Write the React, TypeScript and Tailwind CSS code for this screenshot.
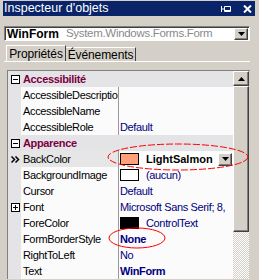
import React from 'react';

const raised = 'border border-t-white border-l-white border-r-[#404040] border-b-[#404040] shadow-[inset_-1px_-1px_0_#808080]';

function Box({ plus }: { plus?: boolean }) {
  return (
    <svg width="9" height="9" viewBox="0 0 9 9" className="block">
      <rect x="0.5" y="0.5" width="8" height="8" fill="#fff" stroke="#000" />
      <line x1="2" y1="4.5" x2="7" y2="4.5" stroke="#000" />
      {plus && <line x1="4.5" y1="2" x2="4.5" y2="7" stroke="#000" />}
    </svg>
  );
}

function DownArrow() {
  return (
    <svg width="7" height="4" viewBox="0 0 7 4">
      <path d="M0 0h7L3.5 4z" fill="#000" />
    </svg>
  );
}

function Category({ label }: { label: string }) {
  return (
    <div className="flex h-[16px] items-center bg-[#e4e3e6]">
      <div className="flex w-[13px] justify-center pl-[1px]">
        <Box />
      </div>
      <span className="pl-[2px] font-bold text-[#7a0040]">{label}</span>
    </div>
  );
}

interface RowProps {
  name: string;
  value?: React.ReactNode;
  margin?: React.ReactNode;
  selected?: boolean;
}

function Row({ name, value, margin, selected }: RowProps) {
  return (
    <div className="flex h-[16px] items-stretch">
      <div className="flex w-[13px] items-center justify-center bg-[#e4e3e6] pl-[1px]">{margin}</div>
      <div className={`w-[97px] overflow-hidden whitespace-nowrap pl-[2px] leading-[16px] text-black ${selected ? 'bg-[#e6e6e6]' : 'bg-[#fbfbfb]'}`}>
        {name}
      </div>
      <div className="w-[1px] bg-[#9a9a9a]" />
      <div className="flex flex-1 items-center overflow-hidden whitespace-nowrap bg-[#fbfbfb] pl-[1px] text-[#000080]">
        {value}
      </div>
    </div>
  );
}

function Swatch({ color }: { color: string }) {
  return <span className="mr-[7px] inline-block h-[12px] w-[19px] border border-black" style={{ backgroundColor: color }} />;
}

export default function App() {
  return (
    <div className="relative h-[280px] w-[259px] overflow-hidden bg-[#d4d0c8] text-[11px] tracking-[-0.35px] font-['Liberation_Sans',Arial,sans-serif]">
      {/* title bar */}
      <div className="ml-[3px] mr-[4px] mt-[1px] flex h-[15px] items-center justify-between bg-[#0a246a] pl-[1px] pr-[3px]">
        <span className="text-[12.5px] tracking-[0px] text-white">Inspecteur d'objets</span>
        <div className="flex items-center gap-[12px]">
          <svg width="10" height="8" viewBox="0 0 10 8">
            <path d="M0.5 1v6M0.5 4h3M3.5 1.5h6v5h-6z M3.5 5.5h6" stroke="#fff" fill="none" />
          </svg>
          <svg width="9" height="8" viewBox="0 0 9 8">
            <path d="M1 0.5l7 7M8 0.5l-7 7" stroke="#fff" strokeWidth="2" />
          </svg>
        </div>
      </div>

      {/* combo box */}
      <div className="ml-[4px] mt-[10px] flex h-[15px] w-[246px] items-center border border-t-[#808080] border-l-[#808080] border-r-white border-b-white bg-white shadow-[inset_1px_1px_0_#404040]">
        <span className="pl-[2px] pt-[1px] text-[12px] font-bold tracking-[0px] text-black">WinForm</span>
        <span className="ml-[7px] pt-[1px] text-[11.5px] tracking-[-0.3px] text-[#8a8a8a]">System.Windows.Forms.Form</span>
        <div className={`ml-auto mr-[1px] flex h-[12px] w-[14px] items-center justify-center bg-[#d4d0c8] ${raised}`}>
          <DownArrow />
        </div>
      </div>

      {/* tabs */}
      <div className="ml-[4px] mt-[5px] flex h-[16px] w-[246px] items-end border-b border-white">
        <div className="ml-[2px] flex h-[16px] w-[60px] items-center justify-center border-l border-t border-r border-l-white border-t-white border-r-[#404040] text-[12px] tracking-[-0.1px] text-black">
          Propriétés
        </div>
        <div className="flex h-[14px] w-[70px] items-center justify-center border-t border-r border-t-white border-r-[#404040] text-[12px] tracking-[-0.1px] text-black">
          Événements
        </div>
      </div>

      {/* property grid */}
      <div className="ml-[7px] mt-[8px] flex w-[243px] border-l border-t border-[#808080]">
        <div className="flex w-[225px] flex-col">
          <Category label="Accessibilité" />
          <Row name="AccessibleDescription" />
          <Row name="AccessibleName" />
          <Row name="AccessibleRole" value="Default" />
          <Category label="Apparence" />
          <Row
            name="BackColor"
            selected
            margin={
              <svg width="9" height="7" viewBox="0 0 9 7">
                <path d="M0.5 0.5l3 3-3 3M4.5 0.5l3 3-3 3" stroke="#000" strokeWidth="1.5" fill="none" />
              </svg>
            }
            value={
              <div className="flex h-[15px] flex-1 items-center bg-white">
                <Swatch color="#ffa07a" />
                <span className="font-bold tracking-[0px] text-black">LightSalmon</span>
                <div className={`ml-auto mr-[1px] flex h-[13px] w-[14px] items-center justify-center bg-[#d4d0c8] ${raised}`}>
                  <DownArrow />
                </div>
              </div>
            }
          />
          <Row name="BackgroundImage" value={<><Swatch color="#ffffff" /><span>(aucun)</span></>} />
          <Row name="Cursor" value="Default" />
          <Row name="Font" margin={<Box plus />} value="Microsoft Sans Serif; 8," />
          <Row name="ForeColor" value={<><Swatch color="#000000" /><span>ControlText</span></>} />
          <Row name="FormBorderStyle" value={<span className="font-bold">None</span>} />
          <Row name="RightToLeft" value="No" />
          <Row name="Text" value={<span className="font-bold">WinForm</span>} />
        </div>

        {/* scrollbar */}
        <div className="flex w-[16px] flex-col">
          <div className={`flex h-[15px] items-center justify-center bg-[#d4d0c8] ${raised}`}>
            <svg width="7" height="4" viewBox="0 0 7 4">
              <path d="M0 4h7L3.5 0z" fill="#000" />
            </svg>
          </div>
          <div className={`h-[146px] bg-[#d4d0c8] ${raised}`} />
          <div className="flex-1 bg-[repeating-conic-gradient(#ffffff_0_25%,#d4d0c8_0_50%)] bg-[length:2px_2px]" />
        </div>
      </div>

      {/* red annotations */}
      <svg className="pointer-events-none absolute left-0 top-0" width="259" height="280">
        <ellipse cx="178" cy="157" rx="70" ry="13" fill="none" stroke="#ff0000" strokeDasharray="7 2" />
        <ellipse cx="137" cy="238" rx="28" ry="10" fill="none" stroke="#ff0000" />
      </svg>
    </div>
  );
}
